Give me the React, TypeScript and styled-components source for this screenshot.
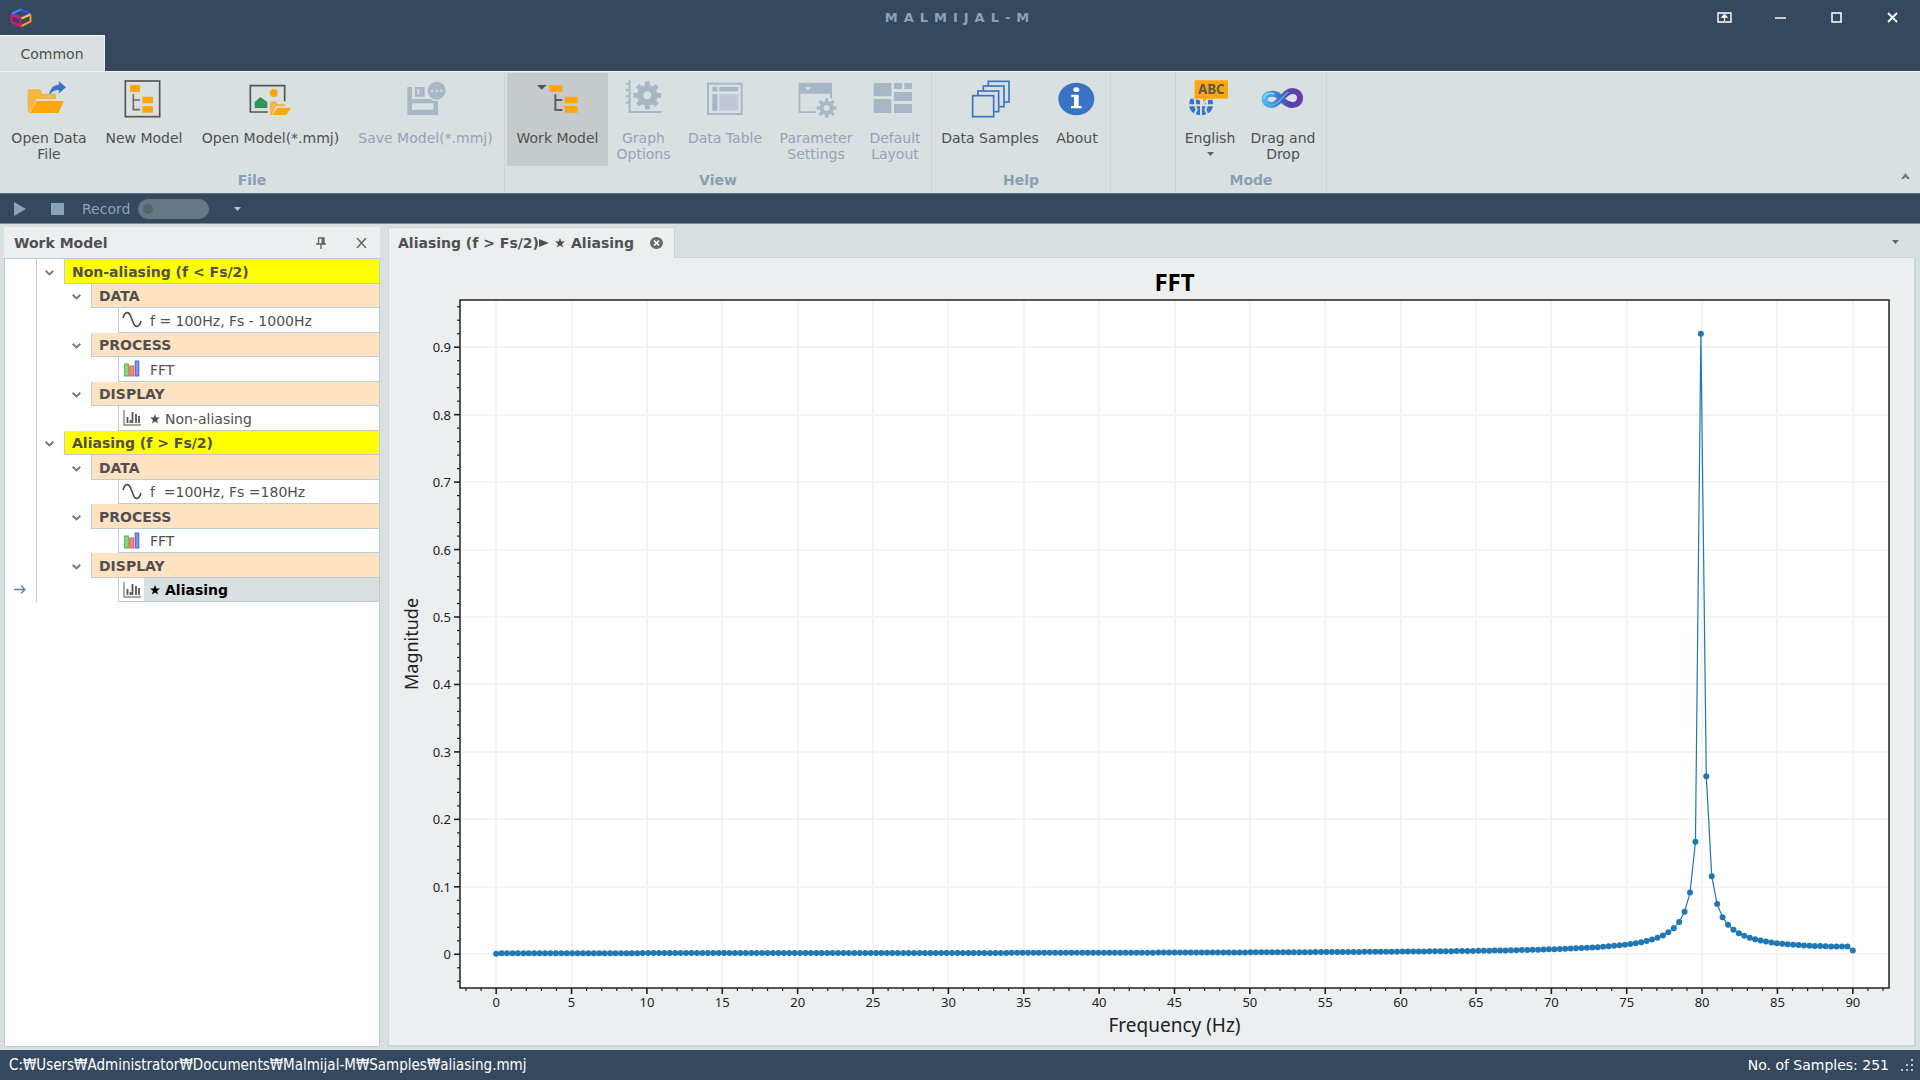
import React, { useLayoutEffect, useRef, useState } from 'react';
import styled, { createGlobalStyle, css } from 'styled-components';

const color = {
  navy: '#34495e',
  navyText: '#8aa2b8',
  surface: '#d8e0e2',
  panel: '#ebeff0',
  line: '#b9ced6',
  softLine: '#c8d5d9',
  text: '#505050',
  disabled: '#94a4b8',
  iconOff: '#a9b6c5',
  iconOffLight: '#c1c9d6',
  amber: '#ffa70a',
  amberSoft: '#f8b444',
  blue: '#3a73c4',
  plot: '#1f77b4',
};

const uiFont = '"DejaVu Sans", Tahoma, Verdana, sans-serif';
const pathFont = '"DejaVu Sans Condensed", "DejaVu Sans", Tahoma, sans-serif';
const chartFont = '"Noto Sans", "Open Sans", sans-serif';

const GlobalStyle = createGlobalStyle`
  *, *::before, *::after { box-sizing: border-box; }
  body { margin: 0; }
  button {
    margin: 0;
    padding: 0;
    border: 0;
    background: none;
    color: inherit;
    font: inherit;
  }
  svg { display: block; flex: none; }
`;

/* ---------- Shell ---------- */

const Window = styled.div`
  display: flex;
  flex-direction: column;
  min-height: 100vh;
  background: ${color.surface};
  color: ${color.text};
  font: 14px/16px ${uiFont};
`;

const TitleBar = styled.header`
  display: grid;
  grid-template-columns: 1fr auto 1fr;
  align-items: center;
  height: 35px;
  background: ${color.navy};
  color: #fff;
`;

const LogoSlot = styled.div`
  padding-left: 10px;
`;

const AppTitle = styled.h1`
  margin: 0;
  color: ${color.navyText};
  font-size: 13px;
  font-weight: 700;
  line-height: 16px;
  letter-spacing: 6px;
`;

const WindowButtons = styled.div`
  display: flex;
  justify-content: flex-end;
`;

const WindowButton = styled.button`
  display: flex;
  align-items: center;
  justify-content: center;
  width: 56px;
  height: 34px;
`;

const RibbonTabs = styled.nav`
  display: flex;
  height: 36px;
  background: ${color.navy};
`;

const RibbonTab = styled.button`
  width: 105px;
  border-top: 1px solid #f2f5f5;
  border-right: 1px solid #f2f5f5;
  background: ${color.surface};
  text-align: center;
`;

const Ribbon = styled.div`
  display: flex;
  height: 122px;
  border-top: 1px solid #eef2f3;
  background: ${color.surface};
`;

const Group = styled.section<{ $spacer?: boolean }>`
  display: flex;
  flex-direction: column;
  padding: 1px 2px 0;
  border-right: 1px solid ${color.softLine};
  ${(p) => p.$spacer && css`width: 65px;`}
`;

const GroupItems = styled.div`
  display: flex;
  height: 93px;
`;

const GroupLabel = styled.h2`
  margin: 0;
  padding-top: 6px;
  color: #8a9eb4;
  font-size: 14px;
  font-weight: 700;
  line-height: 16px;
  text-align: center;
`;

const Tool = styled.button<{ $width: number; $pressed?: boolean }>`
  display: flex;
  flex-direction: column;
  align-items: center;
  justify-content: flex-start;
  gap: 11px;
  width: ${(p) => p.$width}px;
  padding-top: 4px;
  background: ${(p) => (p.$pressed ? '#c5cacd' : 'transparent')};
  white-space: pre-line;
  &:disabled { color: ${color.disabled}; }
`;

const ToolLabel = styled.span`
  display: flex;
  flex-direction: column;
  align-items: center;
  gap: 6px;
`;

const RibbonEnd = styled.div`
  display: flex;
  flex: 1;
  align-items: flex-end;
  justify-content: flex-end;
  padding: 0 10px 14px;
`;

const CollapseButton = styled.button`
  display: flex;
`;

const QuickBar = styled.div`
  display: flex;
  align-items: center;
  gap: 25px;
  height: 31px;
  padding-left: 14px;
  border-top: 1px solid #5b7084;
  border-bottom: 1px solid #7a8b9a;
  background: ${color.navy};
  color: ${color.navyText};
`;

const RecordLabel = styled.label`
  display: flex;
  align-items: center;
  gap: 8px;
  margin-left: -7px;
`;

const Toggle = styled.input`
  appearance: none;
  display: flex;
  align-items: center;
  width: 71px;
  height: 20px;
  margin: 0;
  padding: 0 5px;
  border-radius: 10px;
  background: #667886;
  &::before {
    content: '';
    width: 10px;
    height: 10px;
    border-radius: 50%;
    background: #56646e;
  }
`;

const Workspace = styled.main`
  display: grid;
  grid-template-columns: 376px minmax(0, 1fr);
  gap: 8px;
  flex: 1;
  padding: 3px 4px;
`;

const StatusBar = styled.footer`
  display: flex;
  align-items: center;
  height: 30px;
  padding: 0 6px 0 9px;
  background: ${color.navy};
  color: #fff;
`;

const FilePath = styled.span`
  font-family: ${pathFont};
  font-size: 15px;
`;

const SampleCount = styled.span`
  flex: 1;
  padding-right: 12px;
  text-align: right;
`;

/* ---------- Work model panel ---------- */

const SidePanel = styled.aside`
  display: flex;
  flex-direction: column;
`;

const SideHeader = styled.div`
  display: flex;
  align-items: center;
  height: 31px;
  padding: 0 7px 0 10px;
  background: ${color.panel};
`;

const SideTitle = styled.h2`
  flex: 1;
  margin: 0;
  font-size: 14px;
  font-weight: 700;
  line-height: 16px;
`;

const SideButton = styled.button`
  display: flex;
  align-items: center;
  justify-content: center;
  width: 24px;
  height: 24px;
  & + & { margin-left: 16px; }
`;

const SideBody = styled.div`
  flex: 1;
  border: 1px solid ${color.line};
  background: #fff;
`;

const Tree = styled.ul`
  display: grid;
  grid-auto-rows: 1fr;
  height: 343px;
  margin: 0;
  padding: 0;
  list-style: none;
`;

const TreeRow = styled.li`
  display: flex;
  min-height: 0;
`;

const Gutter = styled.span`
  display: flex;
  align-items: center;
  justify-content: center;
  width: 32px;
  padding-right: 2px;
  border-right: 1px solid ${color.line};
`;

const Indent = styled.span<{ $depth: number }>`
  width: ${(p) => p.$depth * 27}px;
`;

const Expander = styled.button`
  display: flex;
  align-items: center;
  justify-content: center;
  width: 27px;
  padding: 3px 2px 0 0;
`;

type Kind = 'model' | 'section' | 'leaf';

const cellStyle = {
  model: css`
    padding: 2px 0 0 7px;
    background: #ffff00;
    font-weight: 700;
  `,
  section: css`
    padding: 2px 0 0 7px;
    background: #ffe2c2;
    font-weight: 700;
  `,
  leaf: css``,
};

const Cell = styled.span<{ $kind: Kind }>`
  display: flex;
  flex: 1;
  align-items: center;
  border-left: 1px solid ${color.line};
  border-bottom: 1px solid ${color.line};
  white-space: pre;
  ${(p) => cellStyle[p.$kind]}
`;

const LeafIcon = styled.span`
  display: flex;
  align-items: center;
  justify-content: center;
  width: 25px;
`;

const LeafText = styled.span<{ $selected?: boolean }>`
  display: flex;
  flex: 1;
  align-items: center;
  align-self: stretch;
  gap: 5px;
  padding: 2px 0 0 6px;
  ${(p) =>
    p.$selected &&
    css`
      background: ${color.surface};
      color: #000;
      font-weight: 700;
    `}
`;

/* ---------- Document area ---------- */

const Document = styled.section`
  display: flex;
  flex-direction: column;
  min-width: 0;
`;

const DocTabs = styled.div`
  display: flex;
  align-items: stretch;
  height: 31px;
`;

const DocTab = styled.div`
  display: flex;
  align-items: center;
  gap: 16px;
  padding: 0 11px 0 9px;
  border: 1px solid ${color.softLine};
  border-bottom: 0;
  background: ${color.panel};
`;

const DocTabTitle = styled.button`
  display: flex;
  align-items: center;
  gap: 6px;
  font-weight: 700;
`;

const DocTabName = styled.span`
  display: flex;
  align-items: center;
`;

const DocTabRest = styled.div`
  display: flex;
  flex: 1;
  align-items: center;
  justify-content: flex-end;
  padding-right: 17px;
  border-bottom: 1px solid ${color.softLine};
`;

const ChartArea = styled.div`
  flex: 1;
  min-height: 400px;
  border: 2px solid ${color.softLine};
  border-top: 0;
  border-left-width: 1px;
  background: ${color.panel};
  & > svg {
    width: 100%;
    height: 100%;
  }
`;

/* ---------- Ribbon icons ---------- */

const ToolIcon = ({ children }: { children: React.ReactNode }) => (
  <svg width="44" height="42" viewBox="0 0 132 126" aria-hidden="true">
    {children}
  </svg>
);

function gearPath(cx: number, cy: number, outer: number, inner: number, hole: number) {
  const points: string[] = [];
  for (let i = 0; i < 8; i += 1) {
    const a = (i * Math.PI) / 4;
    const steps: [number, number][] = [
      [-0.24, inner],
      [-0.17, outer],
      [0.17, outer],
      [0.24, inner],
    ];
    steps.forEach(([d, r]) => {
      points.push(`${(cx + r * Math.cos(a + d)).toFixed(2)} ${(cy + r * Math.sin(a + d)).toFixed(2)}`);
    });
  }
  return `M${points.join('L')}Z M${cx - hole} ${cy}a${hole} ${hole} 0 1 0 ${hole * 2} 0a${hole} ${hole} 0 1 0 ${-hole * 2} 0Z`;
}

const icons = {
  openData: (
    <ToolIcon>
      <path d="M2 37H40L46 50H87V66H30L8 106H2Z" fill={color.amberSoft} />
      <path d="M29 72H111L94 108H9Z" fill={color.amber} />
      <path d="M65 60C66 38 76 24 95 22V11L118 31L95 51V40C80 40 73 46 65 60Z" fill={color.blue} stroke={color.surface} strokeWidth="2" />
    </ToolIcon>
  ),
  newModel: (
    <ToolIcon>
      <rect x="10" y="12" width="103" height="107" fill="none" stroke="#555" strokeWidth="5" />
      <path d="M24 24h30v21h-30zM61 59h32v20h-32zM61 87h32v20h-32z" fill={color.amber} />
      <path d="M34 52V98H54M34 69H54" fill="none" stroke="#6b6b6b" strokeWidth="5" />
    </ToolIcon>
  ),
  openModel: (
    <ToolIcon>
      <path d="M56 105H4V26H107V73" fill="none" stroke="#555" strokeWidth="5" />
      <circle cx="74" cy="48" r="12" fill={color.amber} />
      <path d="M17 75L34 60L55 75V93H17Z" fill="#35935a" />
      <path d="M63 73H80L85 81H108V88H82L68 114H63Z" fill={color.amberSoft} />
      <path d="M85 92H126L112 114H70Z" fill={color.amber} />
    </ToolIcon>
  ),
  saveModel: (
    <ToolIcon>
      <path d="M10 30H24V66H80L88 72H102V114H10ZM24 79V98H88V79Z" fill={color.iconOff} fillRule="evenodd" />
      <path d="M33 30H62V59H33ZM40 36V52H46V36Z" fill={color.iconOff} fillRule="evenodd" />
      <circle cx="98" cy="41" r="27" fill={color.iconOff} />
      <path d="M81 38h6v6h-6zM95 38h6v6h-6zM109 38h6v6h-6z" fill={color.surface} />
    </ToolIcon>
  ),
  workModel: (
    <ToolIcon>
      <path d="M3 24H32L17 38Z" fill="#555" />
      <path d="M40 24h39v21h-39zM86 59h39v20h-39zM86 87h39v20h-39z" fill={color.amber} />
      <path d="M58 52V99H79M58 69H79" fill="none" stroke="#5f5f5f" strokeWidth="6" />
    </ToolIcon>
  ),
  graphOptions: (
    <ToolIcon>
      <path d="M23 10V105H118M11 20H23M11 39H23M11 58H23M11 77H23" fill="none" stroke={color.iconOff} strokeWidth="6" />
      <path d={gearPath(76, 55, 42, 31, 12)} fill={color.iconOff} fillRule="evenodd" />
    </ToolIcon>
  ),
  dataTable: (
    <ToolIcon>
      <rect x="15" y="20" width="101" height="91" fill="none" stroke={color.iconOff} strokeWidth="6" />
      <path d="M28 30h15v13h-15zM49 30h56v13h-56zM28 51h15v50h-15z" fill={color.iconOff} />
      <path d="M49 51h56v50h-56z" fill={color.iconOffLight} />
    </ToolIcon>
  ),
  parameters: (
    <ToolIcon>
      <path d="M14 17H114V64H108V50H19V103H66V108H14ZM32 31L42 40L52 31Z" fill={color.iconOff} fillRule="evenodd" />
      <path d={gearPath(98, 93, 30, 21, 9)} fill={color.iconOff} fillRule="evenodd" />
    </ToolIcon>
  ),
  layout: (
    <ToolIcon>
      <path
        d="M2 18h53v40h-53zM2 66h53v42h-53zM63 18h24v18h-24zM94 18h23v18h-23zM63 45h54v27h-54zM63 81h54v27h-54z"
        fill={color.iconOff}
      />
    </ToolIcon>
  ),
  samples: (
    <ToolIcon>
      <g fill={color.surface} stroke={color.blue} strokeWidth="5">
        <rect x="61" y="13" width="62" height="62" />
        <rect x="46" y="27" width="62" height="62" />
        <rect x="30" y="42" width="62" height="62" />
        <rect x="14" y="56" width="63" height="63" />
      </g>
    </ToolIcon>
  ),
  about: (
    <ToolIcon>
      <ellipse cx="64" cy="66" rx="54" ry="49" fill={color.blue} />
      <ellipse cx="64" cy="38" rx="9" ry="7" fill="#fff" />
      <path d="M49 53H71V87H80V94H48V87H57V60H49Z" fill="#fff" />
    </ToolIcon>
  ),
  english: (
    <ToolIcon>
      <path d="M8 65H71C74 70 75 76 75 82H4C4 76 5 70 8 65ZM4 88H75C72 104 58 115 39 115C20 115 6 104 4 88Z" fill={color.blue} />
      <path d="M39 64V116M20 64C22 80 20 88 26 98L18 116M58 64C56 80 58 88 52 98L60 116" fill="none" stroke={color.surface} strokeWidth="6" />
      <path d="M17 7H123V68H62L45 86L33 68H17Z" fill={color.surface} />
      <path d="M20 10H120V65H57L45 77V65H20Z" fill={color.amber} />
      <text x="70" y="50" textAnchor="middle" fontFamily="Noto Sans, sans-serif" fontSize="40" fontWeight="700" fill="#5c5a50">
        ABC
      </text>
    </ToolIcon>
  ),
  dragDrop: (
    <ToolIcon>
      <defs>
        <linearGradient id="loop" x1="0" x2="1" y1="0" y2="0">
          <stop offset="0" stopColor="#4fb9ea" />
          <stop offset="0.4" stopColor="#3f78c9" />
          <stop offset="0.7" stopColor="#5446a6" />
          <stop offset="1" stopColor="#6a3aa8" />
        </linearGradient>
      </defs>
      <path d="M74 82L94 54L104 82Z" fill="#dfe3f2" />
      <path
        d="M62 66C52 54 42 49 32 50C19 51 11 57 11 67C11 78 20 84 32 84C56 84 68 42 94 42C108 42 117 51 117 63C117 76 108 84 95 84C82 84 72 78 62 66Z"
        fill="none"
        stroke="url(#loop)"
        strokeWidth="18"
      />
      <path d="M8 64C12 50 26 46 40 51" fill="none" stroke="#9fe2f7" strokeWidth="4" />
      <path d="M22 84C52 90 66 54 82 45" fill="none" stroke="#5fb0ea" strokeWidth="4" />
    </ToolIcon>
  ),
};

/* ---------- Small glyphs ---------- */

const Caret = ({ fill = '#666' }: { fill?: string }) => (
  <svg width="7" height="4" viewBox="0 0 7 4" aria-hidden="true">
    <path d="M0 0H7L3.5 4Z" fill={fill} />
  </svg>
);

const CollapseMark = () => (
  <svg width="9" height="6" viewBox="0 0 9 6" aria-hidden="true">
    <path d="M0 6L4.5 0L9 6H6.5L4.5 4L2.5 6Z" fill="#777" />
  </svg>
);

const Chevron = () => (
  <svg width="9" height="6" viewBox="0 0 9 6" aria-hidden="true">
    <path d="M0.7 0.8L4.5 4.5L8.3 0.8" fill="none" stroke="#777" strokeWidth="1.9" />
  </svg>
);

const Star = () => (
  <svg width="10" height="10" viewBox="0 0 10 10" aria-hidden="true">
    <path d="M5 0L6.3 3.6H10L7 5.9L8.1 9.6L5 7.4L1.9 9.6L3 5.9L0 3.6H3.7Z" fill="currentColor" />
  </svg>
);

const Logo = () => (
  <svg width="22" height="20" viewBox="0 0 22 20" role="img" aria-label="Malmijal">
    <g fill="none" strokeWidth="2" strokeLinejoin="round">
      <path d="M11 1.5L20 5.5L11 9.5L2 5.5Z" stroke="#3c4df2" />
      <path d="M2 5.5L11 1.5" stroke="#2f8bff" />
      <path d="M1.5 6.5L10.5 10.5V18L1.5 14Z" stroke="#ec0f78" />
      <path d="M20.5 6.5L11.5 10.5" stroke="#e8d31c" />
      <path d="M20.5 6.5V13.5L11.5 18" stroke="#f09a1c" />
    </g>
  </svg>
);

const Wave = () => (
  <svg width="20" height="17" viewBox="0 0 20 17" aria-hidden="true">
    <path d="M1 7C3 0 7 0 9 6L11 11C13 17 17 17 19 10" fill="none" stroke="#4a4a4a" strokeWidth="1.6" />
  </svg>
);

const Bars = () => (
  <svg width="16" height="17" viewBox="0 0 16 17" aria-hidden="true">
    <rect x="0.7" y="4" width="3.6" height="12" fill="#8ee07c" stroke="#55a94a" />
    <rect x="5.7" y="6" width="4" height="10" fill="#f58a80" stroke="#e06058" />
    <rect x="11.2" y="1" width="3.6" height="15" fill="#7f93f0" stroke="#4c62c8" />
  </svg>
);

const Spectrum = () => (
  <svg width="18" height="17" viewBox="0 0 18 17" aria-hidden="true">
    <path d="M1 1V16H18" fill="none" stroke="#888" strokeWidth="1.4" />
    <path d="M4.5 8V14M7.5 11V14M9.5 3V14M13 5V14M16 7V14" fill="none" stroke="#555" strokeWidth="1.8" />
  </svg>
);

/* ---------- Chart ---------- */

const SAMPLES = 500;
const RATE = 180;
const SIGNAL = 100;

const spectrum = Array.from({ length: SAMPLES / 2 + 1 }, (_, k) => {
  let re = 0;
  let im = 0;
  for (let n = 0; n < SAMPLES; n += 1) {
    const v = Math.sin((2 * Math.PI * SIGNAL * n) / RATE);
    const w = (2 * Math.PI * k * n) / SAMPLES;
    re += v * Math.cos(w);
    im -= v * Math.sin(w);
  }
  const scale = k === 0 || k === SAMPLES / 2 ? 1 / SAMPLES : 2 / SAMPLES;
  return { f: (k * RATE) / SAMPLES, m: Math.hypot(re, im) * scale };
});

const range = (from: number, to: number) => Array.from({ length: to - from + 1 }, (_, i) => from + i);

function FftChart() {
  const host = useRef<HTMLDivElement>(null);
  const [size, setSize] = useState({ w: 1525, h: 787 });

  useLayoutEffect(() => {
    const el = host.current;
    if (!el) return undefined;
    const measure = () => setSize({ w: el.clientWidth, h: el.clientHeight });
    measure();
    const observer = new ResizeObserver(measure);
    observer.observe(el);
    return () => observer.disconnect();
  }, []);

  const left = 71;
  const top = 42;
  const right = size.w - 25;
  const bottom = size.h - 57;
  const x = (v: number) => left + ((v + 2.4) / 94.8) * (right - left);
  const y = (v: number) => bottom - ((v + 0.05) / 1.02) * (bottom - top);
  const snap = (v: number) => Math.round(v);
  const mid = (left + right) / 2;

  return (
    <ChartArea ref={host}>
      <svg viewBox={`0 0 ${size.w} ${size.h}`} fontFamily={chartFont} role="img" aria-label="FFT magnitude against frequency">
        <rect x={left} y={top} width={right - left} height={bottom - top} fill="#fff" />
        {range(0, 18).map((i) => (
          <line key={i} x1={snap(x(i * 5))} x2={snap(x(i * 5))} y1={top} y2={bottom} stroke="#f4f4f4" strokeWidth="2" />
        ))}
        {range(0, 9).map((i) => (
          <line key={i} x1={left} x2={right} y1={snap(y(i / 10))} y2={snap(y(i / 10))} stroke="#f4f4f4" strokeWidth="2" />
        ))}
        {range(-2, 92).map((i) => {
          const major = i % 5 === 0 && i >= 0 && i <= 90;
          return (
            <line key={i} x1={x(i)} x2={x(i)} y1={bottom} y2={bottom + (major ? 6 : 3)} stroke="#222" strokeWidth={major ? 1.6 : 1.2} />
          );
        })}
        {range(-2, 48).map((i) => {
          const major = i % 5 === 0 && i >= 0;
          return (
            <line key={i} x1={left} x2={left - (major ? 6 : 3)} y1={y(i / 50)} y2={y(i / 50)} stroke="#222" strokeWidth={major ? 1.6 : 1.2} />
          );
        })}
        <polyline points={spectrum.map((p) => `${x(p.f).toFixed(2)},${y(p.m).toFixed(2)}`).join(' ')} fill="none" stroke={color.plot} strokeWidth="1.2" />
        {spectrum.map((p) => (
          <circle key={p.f} cx={x(p.f)} cy={y(p.m)} r="3" fill={color.plot} />
        ))}
        <rect x={left} y={top} width={right - left} height={bottom - top} fill="none" stroke="#222" strokeWidth="1.5" />
        <g fontSize="13" fill="#222">
          {range(0, 18).map((i) => (
            <text key={i} x={x(i * 5)} y={bottom + 19} textAnchor="middle">
              {i * 5}
            </text>
          ))}
          {range(0, 9).map((i) => (
            <text key={i} x={left - 9} y={y(i / 10) + 5} textAnchor="end">
              {i / 10}
            </text>
          ))}
        </g>
        <text x={mid} y={top - 9} textAnchor="middle" fontSize="24" fontWeight="700" fill="#000">
          FFT
        </text>
        <text x={mid} y={bottom + 44} textAnchor="middle" fontSize="19" fill="#222">
          Frequency (Hz)
        </text>
        <text transform={`translate(29 ${(top + bottom) / 2}) rotate(-90)`} textAnchor="middle" fontSize="18" fill="#222">
          Magnitude
        </text>
      </svg>
    </ChartArea>
  );
}

/* ---------- Data ---------- */

type ToolDef = {
  label: string;
  icon: keyof typeof icons;
  width: number;
  disabled?: boolean;
  pressed?: boolean;
  menu?: boolean;
};

const groups: { label: string; tools: ToolDef[] }[] = [
  {
    label: 'File',
    tools: [
      { label: 'Open Data\nFile', icon: 'openData', width: 94 },
      { label: 'New Model', icon: 'newModel', width: 96 },
      { label: 'Open Model(*.mmj)', icon: 'openModel', width: 157 },
      { label: 'Save Model(*.mmj)', icon: 'saveModel', width: 153, disabled: true },
    ],
  },
  {
    label: 'View',
    tools: [
      { label: 'Work Model', icon: 'workModel', width: 101, pressed: true },
      { label: 'Graph\nOptions', icon: 'graphOptions', width: 71, disabled: true },
      { label: 'Data Table', icon: 'dataTable', width: 92, disabled: true },
      { label: 'Parameter\nSettings', icon: 'parameters', width: 90, disabled: true },
      { label: 'Default\nLayout', icon: 'layout', width: 68, disabled: true },
    ],
  },
  {
    label: 'Help',
    tools: [
      { label: 'Data Samples', icon: 'samples', width: 112 },
      { label: 'About', icon: 'about', width: 62 },
    ],
  },
  { label: '', tools: [] },
  {
    label: 'Mode',
    tools: [
      { label: 'English', icon: 'english', width: 64, menu: true },
      { label: 'Drag and\nDrop', icon: 'dragDrop', width: 82 },
    ],
  },
];

type Row = { kind: Kind; text: string; icon?: React.ReactNode; star?: boolean; selected?: boolean };

const rows: Row[] = [
  { kind: 'model', text: 'Non-aliasing (f < Fs/2)' },
  { kind: 'section', text: 'DATA' },
  { kind: 'leaf', text: 'f = 100Hz, Fs - 1000Hz', icon: <Wave /> },
  { kind: 'section', text: 'PROCESS' },
  { kind: 'leaf', text: 'FFT', icon: <Bars /> },
  { kind: 'section', text: 'DISPLAY' },
  { kind: 'leaf', text: 'Non-aliasing', icon: <Spectrum />, star: true },
  { kind: 'model', text: 'Aliasing (f > Fs/2)' },
  { kind: 'section', text: 'DATA' },
  { kind: 'leaf', text: 'f  =100Hz, Fs =180Hz', icon: <Wave /> },
  { kind: 'section', text: 'PROCESS' },
  { kind: 'leaf', text: 'FFT', icon: <Bars /> },
  { kind: 'section', text: 'DISPLAY' },
  { kind: 'leaf', text: 'Aliasing', icon: <Spectrum />, star: true, selected: true },
];

const indentOf = { model: 0, section: 1, leaf: 3 };

/* ---------- App ---------- */

export default function App() {
  return (
    <>
      <GlobalStyle />
      <Window>
        <TitleBar>
          <LogoSlot>
            <Logo />
          </LogoSlot>
          <AppTitle>MALMIJAL-M</AppTitle>
          <WindowButtons>
            <WindowButton aria-label="Full screen">
              <svg width="15" height="11" viewBox="0 0 15 11">
                <path d="M1 1H14V10H1Z" fill="none" stroke="#fff" strokeWidth="1.4" />
                <path d="M7.5 9V4M5 5.2L7.5 2.4L10 5.2Z" fill="#fff" stroke="#fff" strokeWidth="1.2" />
              </svg>
            </WindowButton>
            <WindowButton aria-label="Minimize">
              <svg width="11" height="11" viewBox="0 0 11 11">
                <path d="M0 6H11" stroke="#fff" strokeWidth="1.4" />
              </svg>
            </WindowButton>
            <WindowButton aria-label="Maximize">
              <svg width="11" height="11" viewBox="0 0 11 11">
                <path d="M1 1H10V10H1Z" fill="none" stroke="#fff" strokeWidth="1.5" />
              </svg>
            </WindowButton>
            <WindowButton aria-label="Close">
              <svg width="11" height="11" viewBox="0 0 11 11">
                <path d="M1 1L10 10M10 1L1 10" stroke="#fff" strokeWidth="1.8" />
              </svg>
            </WindowButton>
          </WindowButtons>
        </TitleBar>

        <RibbonTabs>
          <RibbonTab>Common</RibbonTab>
        </RibbonTabs>

        <Ribbon>
          {groups.map((group, i) => (
            <Group key={i} $spacer={group.tools.length === 0}>
              <GroupItems>
                {group.tools.map((tool) => (
                  <Tool key={tool.label} $width={tool.width} $pressed={tool.pressed} disabled={tool.disabled}>
                    {icons[tool.icon]}
                    <ToolLabel>
                      {tool.label}
                      {tool.menu && <Caret />}
                    </ToolLabel>
                  </Tool>
                ))}
              </GroupItems>
              {group.label && <GroupLabel>{group.label}</GroupLabel>}
            </Group>
          ))}
          <RibbonEnd>
            <CollapseButton aria-label="Collapse ribbon">
              <CollapseMark />
            </CollapseButton>
          </RibbonEnd>
        </Ribbon>

        <QuickBar>
          <button aria-label="Play">
            <svg width="12" height="14" viewBox="0 0 12 14">
              <path d="M0 0L12 7L0 14Z" fill={color.navyText} />
            </svg>
          </button>
          <button aria-label="Stop">
            <svg width="13" height="12" viewBox="0 0 13 12">
              <path d="M0 0H13V12H0Z" fill={color.navyText} />
            </svg>
          </button>
          <RecordLabel>
            Record
            <Toggle type="checkbox" />
          </RecordLabel>
          <button aria-label="More commands">
            <Caret fill="#b5c2cf" />
          </button>
        </QuickBar>

        <Workspace>
          <SidePanel>
            <SideHeader>
              <SideTitle>Work Model</SideTitle>
              <SideButton aria-label="Pin panel">
                <svg width="10" height="12" viewBox="0 0 10 12">
                  <path d="M2 1H8V7M2.5 1V7M0 7H10M5 7V12" fill="none" stroke="#666" strokeWidth="1.4" />
                  <path d="M5.5 1H8V7H5.5Z" fill="#666" />
                </svg>
              </SideButton>
              <SideButton aria-label="Close panel">
                <svg width="11" height="10" viewBox="0 0 11 10">
                  <path d="M1 0L10 10M10 0L1 10" stroke="#666" strokeWidth="1.5" />
                </svg>
              </SideButton>
            </SideHeader>
            <SideBody>
              <Tree>
                {rows.map((row, i) => (
                  <TreeRow key={i}>
                    <Gutter>
                      {row.selected && (
                        <svg width="12" height="9" viewBox="0 0 12 9" aria-label="Current item">
                          <path d="M0 4.5H11M7 0.5L11 4.5L7 8.5" fill="none" stroke="#5f8097" strokeWidth="1.3" />
                        </svg>
                      )}
                    </Gutter>
                    <Indent $depth={indentOf[row.kind]} />
                    {row.kind !== 'leaf' && (
                      <Expander aria-label={`Collapse ${row.text}`}>
                        <Chevron />
                      </Expander>
                    )}
                    <Cell $kind={row.kind}>
                      {row.kind === 'leaf' ? (
                        <>
                          <LeafIcon>{row.icon}</LeafIcon>
                          <LeafText $selected={row.selected}>
                            {row.star && <Star />}
                            {row.text}
                          </LeafText>
                        </>
                      ) : (
                        row.text
                      )}
                    </Cell>
                  </TreeRow>
                ))}
              </Tree>
            </SideBody>
          </SidePanel>

          <Document>
            <DocTabs>
              <DocTab>
                <DocTabTitle>
                  <DocTabName>
                    Aliasing (f &gt; Fs/2)
                    <svg width="10" height="8" viewBox="0 0 10 8" aria-hidden="true">
                      <path d="M0 0L10 4L0 8Z" fill={color.text} />
                    </svg>
                  </DocTabName>
                  <Star />
                  Aliasing
                </DocTabTitle>
                <button aria-label="Close tab">
                  <svg width="13" height="12" viewBox="0 0 13 12">
                    <ellipse cx="6.5" cy="6" rx="6.5" ry="6" fill="#6a6a6a" />
                    <path d="M4 3.5L9 8.5M9 3.5L4 8.5" stroke="#fff" strokeWidth="1.6" />
                  </svg>
                </button>
              </DocTab>
              <DocTabRest>
                <button aria-label="Open documents">
                  <Caret />
                </button>
              </DocTabRest>
            </DocTabs>
            <FftChart />
          </Document>
        </Workspace>

        <StatusBar>
          <FilePath>C:₩Users₩Administrator₩Documents₩Malmijal-M₩Samples₩aliasing.mmj</FilePath>
          <SampleCount>No. of Samples: 251</SampleCount>
          <svg width="13" height="13" viewBox="0 0 13 13" aria-hidden="true">
            <path
              d="M10 0h2v2h-2zM5 5h2v2h-2zM10 5h2v2h-2zM0 10h2v2h-2zM5 10h2v2h-2zM10 10h2v2h-2z"
              fill="#b9c4ce"
            />
          </svg>
        </StatusBar>
      </Window>
    </>
  );
}
